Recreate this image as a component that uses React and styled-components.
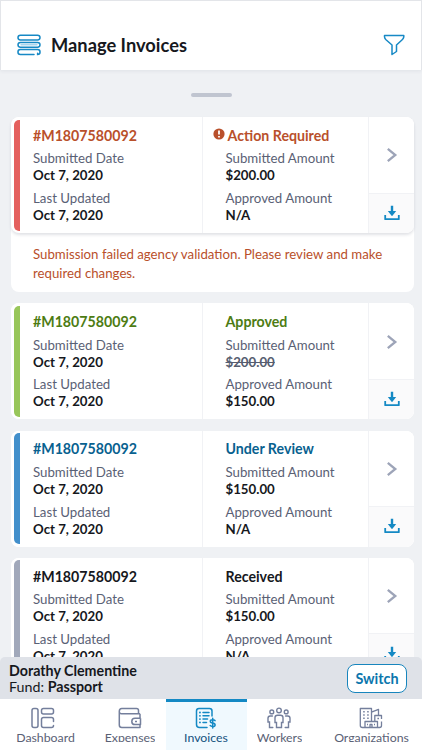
import React from "react";
import styled, { createGlobalStyle, css } from "styled-components";

const GlobalStyle = createGlobalStyle`
  * {
    box-sizing: border-box;
  }
  body {
    margin: 0;
    font-family: Lato, Carlito, "Open Sans", sans-serif;
    color: #16181d;
    background: #eff1f4;
  }
  button {
    font-family: inherit;
    cursor: pointer;
  }
`;

const Screen = styled.div`
  display: flex;
  flex-direction: column;
  width: 422px;
  height: 750px;
  overflow: hidden;
  background: #eff1f4;
`;

const Header = styled.header`
  display: flex;
  align-items: center;
  flex: none;
  height: 70px;
  padding: 18px 16px 0 16px;
  background: #fff;
  border: 1px solid #e3e5e9;
  border-bottom: 0;
  box-shadow: 0 1px 4px rgba(40, 50, 80, 0.08);
`;

const Title = styled.h1`
  flex: 1;
  margin: 0 0 0 10px;
  font-size: 18.3px;
  line-height: 24px;
  font-weight: 700;
`;

const List = styled.main`
  flex: 1;
  min-height: 0;
  overflow: hidden;
  padding: 23px 8px 0 11px;
`;

const Handle = styled.div`
  width: 41px;
  height: 4px;
  margin: 0 auto 20px 180px;
  border-radius: 2px;
  background: #c0c5d0;
`;

const Item = styled.article`
  margin-bottom: 11.1px;
  border-radius: 8px;
  background: #fff;
`;

const Card = styled.div`
  display: flex;
  height: 116.2px;
  border-radius: 8px;
  background: #fff;
  overflow: hidden;
  box-shadow: ${({ $raised }) => ($raised ? "0 2px 3px rgba(40, 50, 80, 0.14)" : "none")};
`;

const Stripe = styled.div`
  width: 6px;
  margin: 2.5px 0 2.5px 3px;
  border-radius: 5px 0 0 5px;
  background: ${({ $color }) => $color};
`;

const Column = styled.div`
  width: ${({ $width }) => $width}px;
  padding: 8.2px 0 0 ${({ $indent }) => $indent}px;
  border-right: 1px solid #f1f2f5;
`;

const Heading = styled.div`
  display: flex;
  align-items: center;
  height: 20px;
  margin-bottom: 4.2px;
  font-size: 14.2px;
  font-weight: 700;
  white-space: nowrap;
  color: ${({ $color }) => $color};
  svg {
    margin: -2px 3px 0 -13px;
  }
`;

const Label = styled.div`
  font-size: 13.25px;
  line-height: 18px;
  color: #5a6175;
`;

const Value = styled.div`
  height: 17px;
  margin-bottom: 4.8px;
  font-size: 13.25px;
  line-height: 17px;
  font-weight: 700;
  ${({ $struck }) =>
    $struck &&
    css`
      color: #565d70;
      text-decoration: line-through;
    `}
`;

const Actions = styled.div`
  flex: 1;
  display: flex;
  flex-direction: column;
`;

const IconButton = styled.button`
  display: flex;
  align-items: center;
  justify-content: center;
  flex: ${({ $tinted }) => ($tinted ? "1" : "0 0 75.5px")};
  padding: ${({ $tinted }) => ($tinted ? "0 0 1px" : "1px 0 0")};
  border: 0;
  border-top: ${({ $tinted }) => ($tinted ? "1px solid #f1f2f5" : "0")};
  background: ${({ $tinted }) => ($tinted ? "#fafafb" : "#fff")};
`;

const Message = styled.p`
  height: 59px;
  margin: 0;
  padding: 12px 20px 0 22px;
  font-size: 13.25px;
  line-height: 19.3px;
  color: #b9502b;
`;

const AccountBar = styled.section`
  display: flex;
  align-items: center;
  justify-content: space-between;
  flex: none;
  height: 42px;
  padding: 0 15px 0 9px;
  border-radius: 5px 5px 0 0;
  background: #dfe2e8;
  font-size: 14.25px;
  line-height: 16px;
  > div {
    padding-top: 1px;
  }
`;

const SwitchButton = styled.button`
  width: 60px;
  height: 29px;
  padding: 0;
  border: 1px solid #1785bd;
  border-radius: 8px;
  background: #fff;
  color: #0b76ad;
  font-size: 14.4px;
  font-weight: 700;
`;

const Tabs = styled.nav`
  display: flex;
  flex: none;
  height: 51px;
  background: #fff;
`;

const Tab = styled.a`
  display: flex;
  flex-direction: column;
  align-items: center;
  width: ${({ $width }) => $width}px;
  margin-left: ${({ $gap }) => $gap || 0}px;
  padding-top: 5px;
  border-top: 3px solid ${({ $active }) => ($active ? "#1489c4" : "transparent")};
  background: ${({ $active }) => ($active ? "#f0f9fe" : "#fff")};
  color: ${({ $active }) => ($active ? "#1489c4" : "#747f9c")};
  svg {
    margin-right: ${({ $nudge }) => $nudge || 0}px;
  }
  span {
    height: 13px;
    overflow: hidden;
    font-size: 12.3px;
    line-height: 17px;
    color: ${({ $active }) => ($active ? "#15527e" : "#5a6175")};
  }
`;

const MenuIcon = () => (
  <svg width="24" height="22" viewBox="0 0 24 22" fill="none" stroke="#1789c5" strokeWidth="1.5" strokeLinecap="round">
    <rect x="1" y="1.2" width="22" height="4.8" rx="2.4" />
    <rect x="1" y="8.4" width="22" height="4.8" rx="2.4" />
    <path d="M17 20.5H3.4a2.4 2.4 0 0 1 0-4.9h17.2a2.4 2.4 0 0 1 0 4.9v-1.3" />
    <path d="M4 10.8H20" stroke="#a9d5ec" strokeWidth="1.4" />
  </svg>
);

const FilterIcon = () => (
  <svg width="22" height="22" viewBox="0 0 22 22" fill="none" stroke="#1789c5" strokeWidth="1.5" strokeLinejoin="round">
    <path d="M1.5 1.5H20.8V2.8Q20.6 4.5 19.2 5.8L13.5 11V17.5L9 20.5V11L3 5.8Q1.6 4.5 1.5 2.8Z" />
  </svg>
);

const AlertIcon = () => (
  <svg width="12" height="12" viewBox="0 0 12 12">
    <circle cx="6" cy="6" r="5.6" fill="#b9502b" />
    <path d="M6 2.5V6.6M6 8V9.6" stroke="#fff" strokeWidth="1.8" />
  </svg>
);

const ChevronIcon = () => (
  <svg width="12" height="16" viewBox="0 0 12 16" fill="none" stroke="#9da4b8" strokeWidth="2.3">
    <path d="M1.8 1.8 9.3 8 1.8 14.2" />
  </svg>
);

const DownloadIcon = () => (
  <svg width="16" height="16" viewBox="0 0 16 16" fill="none" stroke="#1489c4" strokeWidth="1.8">
    <path d="M8 0.8V8" strokeWidth="2.4" />
    <path d="M3.8 6.1H12.2L8 11.2Z" fill="#1489c4" stroke="none" />
    <path d="M1.2 10V14.2H14.8V10" strokeLinejoin="round" />
  </svg>
);

const DashboardIcon = () => (
  <svg width="24" height="22" viewBox="0 0 24 22" fill="none" stroke="currentColor" strokeWidth="1.5" strokeLinecap="round">
    <rect x="1" y="1.5" width="6" height="19" rx="2" />
    <rect x="10.5" y="1.5" width="12" height="5.4" rx="2" />
    <path d="M22.5 14.5V12.5a2 2 0 0 0-2-2h-8a2 2 0 0 0-2 2v6a2 2 0 0 0 2 2h8a2 2 0 0 0 2-2" />
  </svg>
);

const WalletIcon = () => (
  <svg width="24" height="22" viewBox="0 0 24 22" fill="none" stroke="currentColor" strokeWidth="1.5" strokeLinejoin="round">
    <path d="M22 6.8H3.5a2.3 2.3 0 0 1-2.2-2.6q0-2.7 2.5-2.7H18.5q2 0 2 2V6.8M1.3 4V18q0 2.5 2.5 2.5H22V18M22 6.8V11.2" />
    <path d="M22.5 11.2H17a3.2 3.2 0 0 0 0 6.4H22.5V11.2M17 14.4h2" />
  </svg>
);

const InvoiceIcon = () => (
  <svg width="22" height="22" viewBox="0 0 22 22" fill="none" stroke="currentColor" strokeWidth="1.5" strokeLinecap="round">
    <path d="M12 20.5H4.5q-3 0-3-3V4q0-2.5 2.5-2.5H14.5q2.5 0 2.5 2.5V9" />
    <path d="M8 5.5H14M8 8.8H14M8 12.1H12.5M8 15.4H11.5" />
    <path d="M4.9 5.5h.1M4.9 8.8h.1M4.9 12.1h.1M4.9 15.4h.1" strokeWidth="1.8" />
    <path d="M20 13.6q-.8-.9-2.4-.9-2.3 0-2.3 1.6 0 1.4 2.4 1.8 2.4.4 2.4 1.8 0 1.6-2.5 1.6-1.6 0-2.4-.9M17.7 11.3V21" />
  </svg>
);

const WorkersIcon = () => (
  <svg width="24" height="22" viewBox="0 0 24 22" fill="none" stroke="currentColor" strokeWidth="1.4" strokeLinecap="round">
    <circle cx="12" cy="3.4" r="2.3" />
    <circle cx="4.8" cy="4.9" r="1.9" />
    <circle cx="19.2" cy="4.9" r="1.9" />
    <path d="M9.5 20.5V15.5H8V10.8q0-2.5 2.5-2.5h3q2.5 0 2.5 2.5V15.5H14.5V20.5Z" />
    <path d="M5.4 9H3.2Q1 9 1 11.2V15H2.5V20.5H5.8M18.6 9h2.2Q23 9 23 11.2V15H21.5V20.5H18.2" />
  </svg>
);

const OrganizationsIcon = () => (
  <svg width="24" height="22" viewBox="0 0 24 22" fill="none" stroke="currentColor" strokeWidth="1.3" strokeLinejoin="round">
    <path d="M6 20.5H3.5q-2.2 0-2.2-2V1.5H12.5V14.5M12.5 5.2 19.5 2.3V8M15.8 14.5V8.5H22.5V12M22.5 14.5V18.5q0 2-2 2H6V14.5H18.5V20.5M11 20.5V17.5H13V20.5" />
    <path d="M4.2 4.8H5.7M8.2 4.8H9.7M4.2 8H5.7M8.2 8H9.7M4.2 11.2H5.7M8.2 11.2H9.7M18.4 11.5H20M8 17.5h1M15 17.5h1" strokeWidth="1.6" />
  </svg>
);

const invoices = [
  {
    status: "Action Required",
    color: "#b9502b",
    stripe: "#e4605e",
    submitted: "$200.00",
    approved: "N/A",
    message: "Submission failed agency validation. Please review and make required changes.",
  },
  { status: "Approved", color: "#4d7c13", stripe: "#98c65a", submitted: "$200.00", approved: "$150.00", struck: true },
  { status: "Under Review", color: "#08618f", stripe: "#428fcb", submitted: "$150.00", approved: "N/A" },
  { status: "Received", color: "#16181d", stripe: "#a1a8ba", submitted: "$150.00", approved: "N/A" },
];

const tabs = [
  { name: "Dashboard", icon: DashboardIcon, width: 91, nudge: 5 },
  { name: "Expenses", icon: WalletIcon, width: 71, gap: 3.5 },
  { name: "Invoices", icon: InvoiceIcon, width: 81, active: true },
  { name: "Workers", icon: WorkersIcon, width: 66, nudge: 1 },
  { name: "Organizations", icon: OrganizationsIcon, width: 101, gap: 8.5, nudge: 1 },
];

const Invoice = ({ status, color, stripe, submitted, approved, struck, message }) => (
  <Item>
    <Card $raised={!!message}>
      <Stripe $color={stripe} />
      <Column $width={183} $indent={13}>
        <Heading $color={color}>#M1807580092</Heading>
        <Label>Submitted Date</Label>
        <Value>Oct 7, 2020</Value>
        <Label>Last Updated</Label>
        <Value>Oct 7, 2020</Value>
      </Column>
      <Column $width={166} $indent={22.5}>
        <Heading $color={color}>
          {message && <AlertIcon />}
          {status}
        </Heading>
        <Label>Submitted Amount</Label>
        <Value $struck={struck}>{submitted}</Value>
        <Label>Approved Amount</Label>
        <Value>{approved}</Value>
      </Column>
      <Actions>
        <IconButton aria-label="Open invoice"><ChevronIcon /></IconButton>
        <IconButton $tinted aria-label="Download invoice"><DownloadIcon /></IconButton>
      </Actions>
    </Card>
    {message && <Message>{message}</Message>}
  </Item>
);

const App = () => (
  <Screen>
    <GlobalStyle />
    <Header>
      <MenuIcon />
      <Title>Manage Invoices</Title>
      <FilterIcon />
    </Header>
    <List>
      <Handle />
      {invoices.map((invoice) => (
        <Invoice key={invoice.status} {...invoice} />
      ))}
    </List>
    <AccountBar>
      <div>
        <div><strong>Dorathy Clementine</strong></div>
        <div>Fund: <strong>Passport</strong></div>
      </div>
      <SwitchButton>Switch</SwitchButton>
    </AccountBar>
    <Tabs>
      {tabs.map(({ name, icon: Icon, width, gap, nudge, active }) => (
        <Tab key={name} $width={width} $gap={gap} $nudge={nudge} $active={active}>
          <Icon />
          <span>{name}</span>
        </Tab>
      ))}
    </Tabs>
  </Screen>
);

export default App;
